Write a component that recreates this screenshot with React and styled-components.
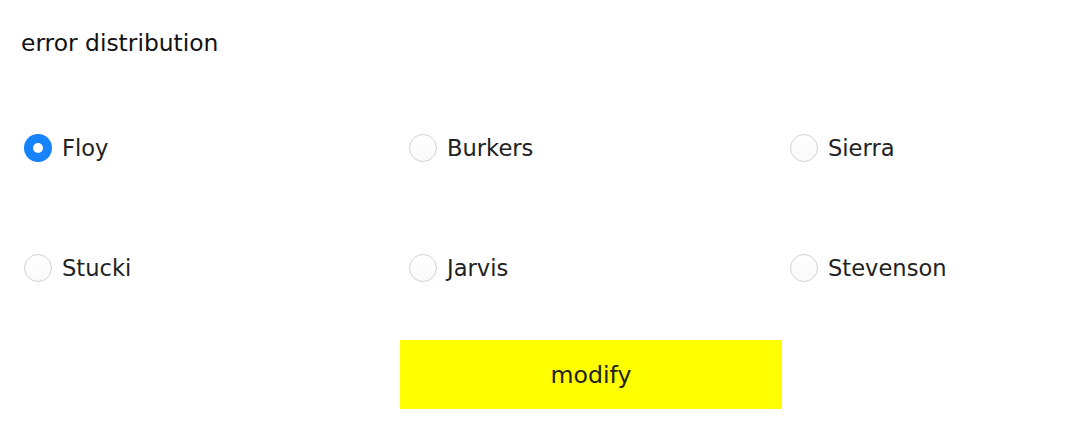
import React, { useState } from 'react'
import styled, { createGlobalStyle } from 'styled-components'

const GlobalStyle = createGlobalStyle`
  body {
    margin: 0;
    background: #fff;
    font-family: "DejaVu Sans", "Liberation Sans", sans-serif;
    color: #222;
  }
`

const Page = styled.div`
  width: 1090px;
  height: 428px;
  box-sizing: border-box;
  padding: 28px 0 0 0;
`

const Title = styled.div`
  padding-left: 21px;
  height: 30px;
  line-height: 30px;
  font-size: 23.4px;
  color: #111;
`

const Options = styled.div`
  display: grid;
  grid-template-columns: 385px 381px 1fr;
  grid-auto-rows: 120px;
  margin-top: 30px;
  padding-left: 24px;
`

const Option = styled.label`
  display: flex;
  align-items: center;
  gap: 10px;
  font-size: 22.6px;
  color: #222;
  cursor: pointer;
`

const Radio = styled.input`
  appearance: none;
  margin: 0;
  width: 28px;
  height: 28px;
  border-radius: 50%;
  box-sizing: border-box;
  border: 1px solid #d2d2d2;
  background: linear-gradient(#ffffff, #fafafa);
  display: grid;
  place-items: center;
  cursor: pointer;

  &:checked {
    border: none;
    background: #1783fb;
  }

  &:checked::after {
    content: '';
    width: 10px;
    height: 10px;
    border-radius: 50%;
    background: #fff;
  }
`

const ButtonRow = styled.div`
  margin-top: 12px;
  padding-left: 400px;
`

const ModifyButton = styled.button`
  width: 382px;
  height: 69px;
  border: none;
  background: #ffff00;
  font-family: inherit;
  font-size: 23.6px;
  color: #222;
  cursor: pointer;
`

const names = ['Floy', 'Burkers', 'Sierra', 'Stucki', 'Jarvis', 'Stevenson']

export default function App() {
  const [selected, setSelected] = useState('Floy')

  return (
    <Page>
      <GlobalStyle />
      <Title>error distribution</Title>
      <Options>
        {names.map((name) => (
          <Option key={name}>
            <Radio
              type="radio"
              name="distribution"
              checked={selected === name}
              onChange={() => setSelected(name)}
            />
            {name}
          </Option>
        ))}
      </Options>
      <ButtonRow>
        <ModifyButton>modify</ModifyButton>
      </ButtonRow>
    </Page>
  )
}
